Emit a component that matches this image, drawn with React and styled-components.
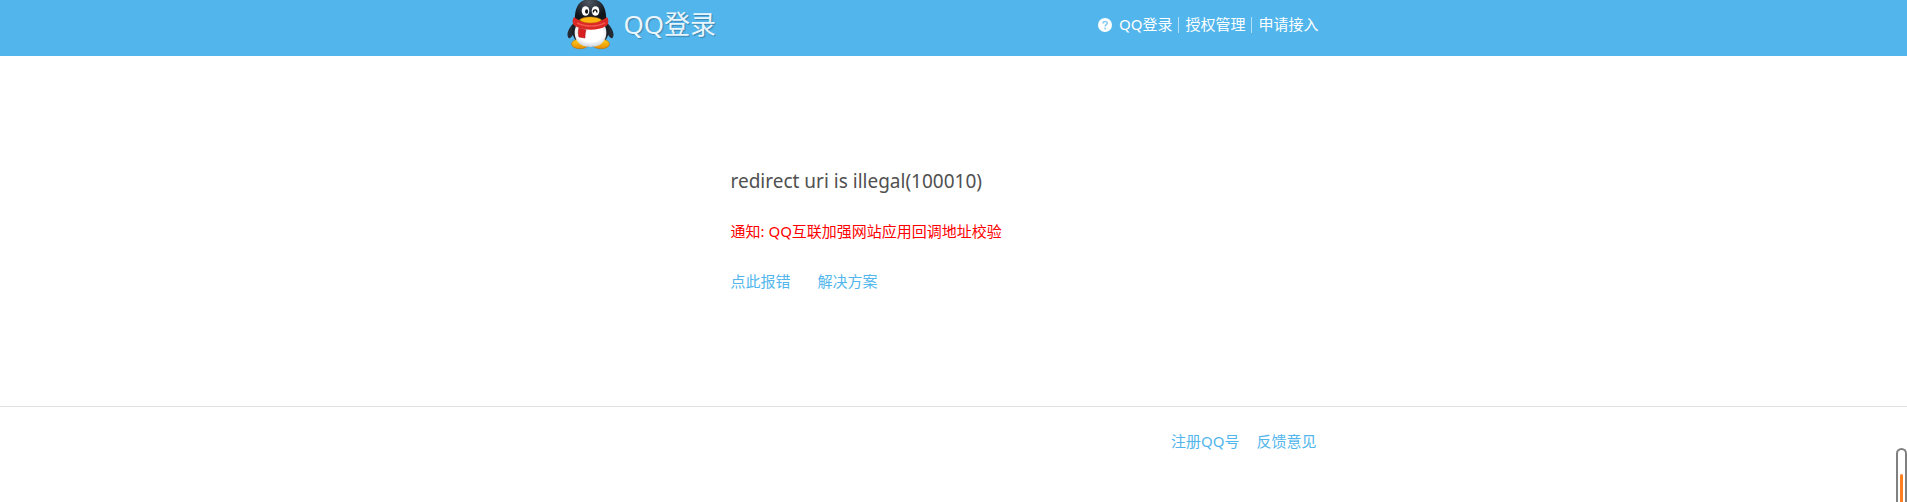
import React from "react";
import styled, { createGlobalStyle } from "styled-components";

const GlobalStyle = createGlobalStyle`
  * {
    box-sizing: border-box;
  }
  body {
    margin: 0;
    background: #fff;
    color: #505050;
    font: 15px/20px "Noto Sans", "Noto Sans CJK SC", sans-serif;
  }
`;

const Header = styled.header`
  height: 56px;
  background: #52b6ec;
`;

const Wrap = styled.div`
  display: flex;
  justify-content: space-between;
  width: 100%;
  max-width: 774px;
  margin: 0 auto;
  padding-right: 22px;
`;

const Logo = styled.a`
  display: flex;
  align-items: flex-start;
  gap: 10px;
  color: #e9f6fd;
  text-decoration: none;
  svg {
    display: block;
  }
`;

const LogoText = styled.span`
  padding-top: 6px;
  font-size: 26px;
  line-height: 36px;
  text-shadow: 1px 1px 1px #3c83ad;
`;

const HeaderNav = styled.nav`
  display: flex;
  align-items: center;
  height: 48px;
  svg {
    margin: 2px 7px 0 0;
  }
`;

const HeaderLink = styled.a`
  color: #fff;
  text-decoration: none;
`;

const Divider = styled.span`
  width: 1px;
  height: 16px;
  margin: 2px 6px 0;
  background: #b4dff7;
`;

const Main = styled.main`
  max-width: 774px;
  min-height: 350px;
  margin: 0 auto;
  padding: 110px 0 0 164px;
`;

const Title = styled.h1`
  margin: 0 0 25px;
  font-size: 19px;
  line-height: 30px;
  font-weight: 400;
`;

const Notice = styled.p`
  margin: 0 0 30px;
  color: #f00;
`;

const LinkRow = styled.div`
  display: flex;
  gap: ${({ $gap }) => $gap}px;
`;

const TextLink = styled.a`
  color: #52b6ec;
  text-decoration: none;
`;

const Footer = styled.footer`
  border-top: 1px solid #e0e0e0;
  padding-top: 24px;
`;

const FooterInner = styled(Wrap)`
  justify-content: flex-end;
  padding-right: 24px;
`;

const Gauge = styled.div`
  position: fixed;
  right: 0;
  bottom: 0;
  width: 11px;
  height: 54px;
  padding: 24px 2px 0;
  border: 2px solid #808080;
  border-bottom: 0;
  border-radius: 6px 6px 0 0;
  background: #fff;
`;

const GaugeFill = styled.div`
  height: 100%;
  border-radius: 2px 2px 0 0;
  background: #ff7f1f;
`;

const Penguin = () => (
  <svg width="47" height="50" viewBox="0 0 47 50" aria-hidden="true">
    <defs>
      <radialGradient id="belly" cx="50%" cy="35%" r="65%">
        <stop offset="0.6" stopColor="#fff" />
        <stop offset="1" stopColor="#cbd3dc" />
      </radialGradient>
      <linearGradient id="foot" x1="0" y1="0" x2="0" y2="1">
        <stop offset="0" stopColor="#ffd21c" />
        <stop offset="1" stopColor="#e88a00" />
      </linearGradient>
      <radialGradient id="head" cx="45%" cy="12%" r="60%">
        <stop offset="0" stopColor="#4d5662" />
        <stop offset="1" stopColor="#11151c" />
      </radialGradient>
    </defs>
    <path d="M8 22C3 26-1 33 1 37c1 3 4 0 6-4zM39 22c5 4 9 11 7 15-1 3-4 0-6-4z" fill="#252a32" />
    <path d="M6 24C3 34 8 46 23.500 47 39 46 44 34 41 24z" fill="#1a1e25" />
    <ellipse cx="13" cy="44" rx="8.500" ry="4.800" fill="url(#foot)" stroke="#b36b08" strokeWidth=".6" />
    <ellipse cx="34" cy="44" rx="8.500" ry="4.800" fill="url(#foot)" stroke="#b36b08" strokeWidth=".6" />
    <path d="M9 26C5 36 10 47 23.500 47S42 36 38 26z" fill="url(#belly)" />
    <path d="M8 21C7 8 12-1 23.500-1S40 8 39 21c-6 6-25 6-31 0z" fill="url(#head)" />
    <ellipse cx="18.500" cy="11" rx="3.800" ry="4.800" fill="#fff" />
    <ellipse cx="28.500" cy="11" rx="3.800" ry="4.800" fill="#fff" />
    <ellipse cx="19.600" cy="11.500" rx="1.500" ry="2.200" fill="#111" />
    <path d="M26.300 12.500c0-3.500 3.600-3.500 3.600 0" fill="none" stroke="#111" strokeWidth="1.400" />
    <path d="M7 17c8 7 25 7 33 0 2 3 2 7-1 9-8 5-22 5-31 0-3-2-3-6-1-9z" fill="#dc2824" />
    <path d="M10 23c8 4 20 4 28 0" fill="none" stroke="#f2564d" strokeWidth="1.500" />
    <path d="M12 28l7 2c-1 3-1 5-1 8l-6-1c-1-3-1-6 0-9z" fill="#d91f1f" stroke="#a91414" strokeWidth=".6" />
    <path d="M12.500 20c3-4 18-4 22 0-4 4-18 4-22 0z" fill="#ffb511" stroke="#c97a08" strokeWidth=".5" />
  </svg>
);

const HelpIcon = () => (
  <svg width="14" height="14" viewBox="0 0 14 14" aria-hidden="true">
    <circle cx="7" cy="7" r="7" fill="#fff" />
    <path
      d="M5 5.500C5 2.800 9.200 2.900 9.200 5.300 9.200 6.700 7.200 6.800 7.200 8.400"
      fill="none"
      stroke="#8acbef"
      strokeWidth="1.600"
    />
    <circle cx="7.200" cy="10.500" r="1" fill="#8acbef" />
  </svg>
);

export default function App() {
  return (
    <>
      <GlobalStyle />
      <Header>
        <Wrap>
          <Logo href="#">
            <Penguin />
            <LogoText>QQ登录</LogoText>
          </Logo>
          <HeaderNav>
            <HelpIcon />
            <HeaderLink href="#">QQ登录</HeaderLink>
            <Divider />
            <HeaderLink href="#">授权管理</HeaderLink>
            <Divider />
            <HeaderLink href="#">申请接入</HeaderLink>
          </HeaderNav>
        </Wrap>
      </Header>
      <Main>
        <Title>redirect uri is illegal(100010)</Title>
        <Notice>通知: QQ互联加强网站应用回调地址校验</Notice>
        <LinkRow $gap={27}>
          <TextLink href="#">点此报错</TextLink>
          <TextLink href="#">解决方案</TextLink>
        </LinkRow>
      </Main>
      <Footer>
        <FooterInner>
          <LinkRow $gap={17}>
            <TextLink href="#">注册QQ号</TextLink>
            <TextLink href="#">反馈意见</TextLink>
          </LinkRow>
        </FooterInner>
      </Footer>
      <Gauge>
        <GaugeFill />
      </Gauge>
    </>
  );
}
